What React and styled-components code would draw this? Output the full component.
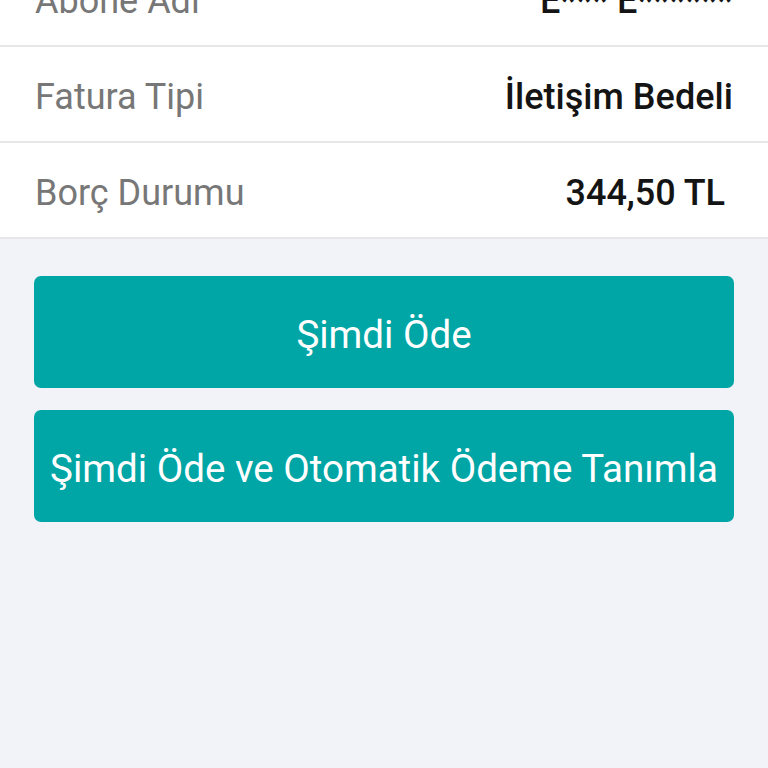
import React from "react";
import styled, { createGlobalStyle } from "styled-components";

const GlobalStyle = createGlobalStyle`
  html, body {
    margin: 0;
    padding: 0;
    background: #f2f3f8;
    font-family: Roboto, "Noto Sans", sans-serif;
    overflow: hidden;
  }
`;

const Page = styled.div`
  width: 768px;
  height: 768px;
  background: #f2f3f8;
  overflow: hidden;
`;

const InfoList = styled.div`
  margin-top: -49px;
  background: #ffffff;
  border-bottom: 2px solid #e6e6e9;
`;

const Row = styled.div`
  box-sizing: border-box;
  height: ${(p) => (p.$first ? "94px" : "96px")};
  display: flex;
  align-items: center;
  justify-content: space-between;
  padding: 6px 35px 0;
  border-top: ${(p) => (p.$first ? "none" : "2px solid #e6e6e9")};
`;

const Label = styled.span`
  font-size: 36px;
  color: #777777;
`;

const Value = styled.span`
  font-family: "Roboto Medium", Roboto, sans-serif;
  font-size: 36px;
  font-weight: 500;
  color: #141414;
  padding-right: ${(p) => (p.$inset ? "8px" : "0")};
`;

const Actions = styled.div`
  display: flex;
  flex-direction: column;
  gap: 22px;
  padding: 37px 34px 0;
`;

const PayButton = styled.button`
  height: 112px;
  padding: 4px 0 0;
  border: none;
  border-radius: 7px;
  background: #00a5a5;
  color: #ffffff;
  font-family: Roboto, "Noto Sans", sans-serif;
  font-size: 38.5px;
  cursor: pointer;
`;

const rows = [
  { label: "Abone Adı", value: "E*** E******" },
  { label: "Fatura Tipi", value: "İletişim Bedeli" },
  { label: "Borç Durumu", value: "344,50 TL", inset: true },
];

const App = () => {
  return (
    <>
      <GlobalStyle />
      <Page>
        <InfoList>
          {rows.map((r, i) => (
            <Row key={r.label} $first={i === 0}>
              <Label>{r.label}</Label>
              <Value $inset={r.inset}>{r.value}</Value>
            </Row>
          ))}
        </InfoList>
        <Actions>
          <PayButton>Şimdi Öde</PayButton>
          <PayButton>Şimdi Öde ve Otomatik Ödeme Tanımla</PayButton>
        </Actions>
      </Page>
    </>
  );
};

export default App;
